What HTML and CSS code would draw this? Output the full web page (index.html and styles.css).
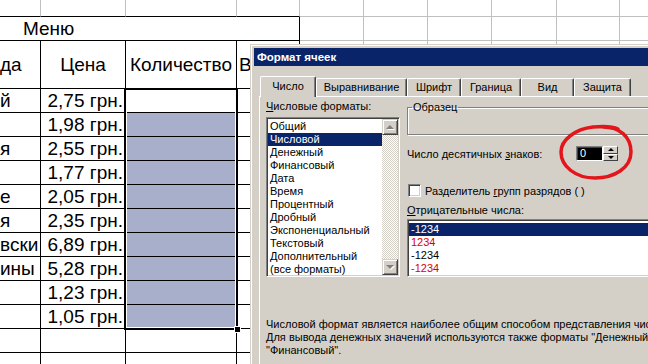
FILE: index.html
```html
<!DOCTYPE html>
<html lang="ru">
<head>
    <meta charset="UTF-8">
    <title>Формат ячеек</title>
    <link rel="stylesheet" href="styles.css">
</head>
<body>
    <div class="sheet">
        <!-- row 1 -->
        <div class="c top"></div><div class="c top"></div><div class="c top"></div><div class="c top"></div>
        <div class="c"></div><div class="c"></div><div class="c"></div><div class="c"></div><div class="c"></div><div class="c"></div>
        <!-- row 2 -->
        <div class="c b menu">Меню</div>
        <div class="c"></div><div class="c"></div><div class="c"></div><div class="c"></div><div class="c"></div><div class="c"></div>
        <!-- header -->
        <div class="c b">да</div>
        <div class="c b center">Цена</div>
        <div class="c b center">Количество</div>
        <div class="c b pad">В</div>
        <div class="c"></div><div class="c"></div><div class="c"></div><div class="c"></div><div class="c"></div><div class="c"></div>
        <!-- data -->
        <div class="c b">й</div><div class="c b price">2,75 грн.</div><div class="c b"></div><div class="c b"></div><div class="filler"></div>
        <div class="c b"></div><div class="c b price">1,98 грн.</div><div class="c b sel"></div><div class="c b"></div><div class="filler"></div>
        <div class="c b">я</div><div class="c b price">2,55 грн.</div><div class="c b sel"></div><div class="c b"></div><div class="filler"></div>
        <div class="c b"></div><div class="c b price">1,77 грн.</div><div class="c b sel"></div><div class="c b"></div><div class="filler"></div>
        <div class="c b">е</div><div class="c b price">2,05 грн.</div><div class="c b sel"></div><div class="c b"></div><div class="filler"></div>
        <div class="c b">я</div><div class="c b price">2,35 грн.</div><div class="c b sel"></div><div class="c b"></div><div class="filler"></div>
        <div class="c b">вски</div><div class="c b price">6,89 грн.</div><div class="c b sel"></div><div class="c b"></div><div class="filler"></div>
        <div class="c b">ины</div><div class="c b price">5,28 грн.</div><div class="c b sel"></div><div class="c b"></div><div class="filler"></div>
        <div class="c b"></div><div class="c b price">1,23 грн.</div><div class="c b sel"></div><div class="c b"></div><div class="filler"></div>
        <div class="c b"></div><div class="c b price">1,05 грн.</div><div class="c b sel"></div><div class="c b"></div><div class="filler"></div>
        <div class="c b"></div><div class="c b"></div><div class="c b"></div><div class="c b"></div><div class="filler"></div>
        <div class="c b"></div><div class="c b"></div><div class="c b"></div><div class="c b"></div><div class="filler"></div>

        <div class="selection"><span class="handle"></span></div>
    </div>

    <div class="dialog">
        <div class="titlebar">Формат ячеек</div>
        <div class="tabs">
            <div class="tab active" style="width: 56px">Число</div>
            <div class="tab" style="width: 91px">Выравнивание</div>
            <div class="tab" style="width: 54px">Шрифт</div>
            <div class="tab" style="width: 60px">Граница</div>
            <div class="tab" style="width: 53px">Вид</div>
            <div class="tab" style="width: 57px">Защита</div>
        </div>
        <div class="panel">
            <div class="panel-cols">
                <div class="col-left">
                    <div class="label"><u>Ч</u>исловые форматы:</div>
                    <div class="listbox fmt-list">
                        <ul class="items">
                            <li>Общий</li>
                            <li class="picked">Числовой</li>
                            <li>Денежный</li>
                            <li>Финансовый</li>
                            <li>Дата</li>
                            <li>Время</li>
                            <li>Процентный</li>
                            <li>Дробный</li>
                            <li>Экспоненциальный</li>
                            <li>Текстовый</li>
                            <li>Дополнительный</li>
                            <li>(все форматы)</li>
                        </ul>
                        <div class="scrollbar">
                            <div class="sb-btn"><span class="arrow up"></span></div>
                            <div class="sb-track"></div>
                            <div class="sb-btn"><span class="arrow down"></span></div>
                        </div>
                    </div>
                </div>
                <div class="col-right">
                    <fieldset class="sample">
                        <legend>Образец</legend>
                    </fieldset>
                    <div class="decimals">
                        <span class="dec-label">Число десятичных <u>з</u>наков:</span>
                        <div class="spin">
                            <div class="spin-edit">0</div>
                            <div class="spin-btns">
                                <div class="spin-btn"><span class="tri up"></span></div>
                                <div class="spin-btn"><span class="tri down"></span></div>
                            </div>
                        </div>
                    </div>
                    <div class="check-row">
                        <span class="checkbox"></span>
                        <span>Разделитель <u>г</u>рупп разрядов ( )</span>
                    </div>
                    <div class="label"><u>О</u>трицательные числа:</div>
                    <div class="listbox neg-list">
                        <ul class="items">
                            <li class="picked">-1234</li>
                            <li class="red">1234</li>
                            <li>-1234</li>
                            <li class="red">-1234</li>
                        </ul>
                    </div>
                </div>
            </div>
            <p class="desc">Числовой формат является наиболее общим способом представления чисел.<br>Для вывода денежных значений используются также форматы "Денежный" и<br>"Финансовый".</p>
        </div>
    </div>

    <svg class="mark" width="90" height="64" viewBox="0 0 90 64">
        <path d="M51 7 C68 7 79 17 79 32 C79 48 62 58 43 58 C23 58 9 46 9 32 C9 20 23 9 41 7 C51 6 60 6 66 9" fill="none" stroke="#e2161b" stroke-width="3.5" stroke-linecap="round"/>
    </svg>
</body>
</html>
```

FILE: styles.css
```css
body {
    margin: 0;
    width: 648px;
    height: 364px;
    overflow: hidden;
    position: relative;
    background: #fff;
    font-family: 'Liberation Sans', Arial, sans-serif;
    color: #000;
}

/* spreadsheet behind the dialog */
.sheet {
    position: relative;
    display: grid;
    grid-template-columns: 41px 85px 111px 63px 64px 64px 64px 65px 63px 64px;
    grid-template-rows: 17px 24px 48px repeat(12, 24px);
    width: 684px;
    font-size: 19px;
}
.c {
    box-sizing: border-box;
    border-right: 1px solid #c0c0c0;
    border-bottom: 1px solid #c0c0c0;
    display: flex;
    align-items: center;
    white-space: nowrap;
    overflow: hidden;
}
.c.top {
    border-bottom-color: #000;
}
.c.b {
    border-color: #000;
}
.menu {
    grid-column: 1 / 5;
    padding-left: 23px;
}
.center {
    justify-content: center;
}
.pad {
    padding-left: 2px;
}
.price {
    justify-content: flex-end;
    padding-right: 2px;
}
.sel {
    background: #a8afcb;
}
.filler {
    grid-column: 5 / -1;
}
.selection {
    position: absolute;
    left: 124px;
    top: 88px;
    width: 110px;
    height: 238px;
    border: 2px solid #000;
    box-shadow: inset 0 0 0 1px #fff;
}
.selection .handle {
    position: absolute;
    right: -5px;
    bottom: -5px;
    width: 5px;
    height: 5px;
    background: #000;
    border: 1px solid #fff;
}

/* dialog window */
.dialog {
    position: absolute;
    left: 250px;
    top: 44px;
    width: 460px;
    height: 340px;
    background: #d4d0c8;
    border: 1px solid #d4d0c8;
    box-shadow: inset 1px 1px #fff;
    padding: 3px;
    font-size: 11px;
}
.titlebar {
    height: 18px;
    line-height: 18px;
    padding-left: 3px;
    background: #0a246a;
    color: #fff;
    font-weight: bold;
    font-size: 11.5px;
}
.tabs {
    display: flex;
    align-items: flex-end;
    height: 21px;
    margin-top: 9px;
    padding-left: 6px;
}
.tab {
    box-sizing: border-box;
    height: 18px;
    line-height: 16px;
    text-align: center;
    border-top: 1px solid #fff;
    border-left: 1px solid #fff;
    border-right: 1px solid #404040;
    box-shadow: inset -1px 0 #808080;
    border-radius: 2px 2px 0 0;
}
.tab.active {
    height: 21px;
    line-height: 19px;
    margin-bottom: -1px;
    position: relative;
    background: #d4d0c8;
}
.panel {
    margin-left: 5px;
    height: 300px;
    border-top: 1px solid #fff;
    border-left: 1px solid #fff;
    padding: 3px 0 0 6px;
}
.panel-cols {
    display: flex;
    gap: 7px;
}
.col-left {
    width: 134px;
}
.col-right {
    flex: 1;
}
.label {
    line-height: 13px;
    white-space: nowrap;
}
.listbox {
    box-sizing: border-box;
    background: #fff;
    border: 1px solid;
    border-color: #808080 #fff #fff #808080;
    box-shadow: inset 1px 1px #404040, inset -1px -1px #d4d0c8;
    padding: 1px;
    display: flex;
}
.items {
    list-style: none;
    margin: 0;
    padding: 1px 0 0;
    flex: 1;
}
.items li {
    height: 13px;
    line-height: 13px;
    padding-left: 2px;
    white-space: nowrap;
}
.items li.picked {
    background: #0a246a;
    color: #fff;
}
.items li.red {
    color: #e00000;
}
.fmt-list {
    margin-top: 4px;
    height: 160px;
}
.scrollbar {
    width: 16px;
    display: flex;
    flex-direction: column;
}
.sb-btn {
    box-sizing: border-box;
    height: 16px;
    background: #d4d0c8;
    border: 1px solid;
    border-color: #d4d0c8 #404040 #404040 #d4d0c8;
    box-shadow: inset 1px 1px #fff, inset -1px -1px #808080;
    display: flex;
    align-items: center;
    justify-content: center;
}
.sb-track {
    flex: 1;
    background: repeating-conic-gradient(#d4d0c8 0 25%, #fff 0 50%) 0 0 / 2px 2px;
}
.arrow {
    width: 0;
    height: 0;
    border-left: 4px solid transparent;
    border-right: 4px solid transparent;
    filter: drop-shadow(1px 1px 0 #fff);
}
.arrow.up {
    border-bottom: 4px solid #808080;
}
.arrow.down {
    border-top: 4px solid #808080;
}
.sample {
    box-sizing: border-box;
    height: 34px;
    margin: 1px 0 0;
    padding: 0;
    border: 1px solid #808080;
    box-shadow: inset 1px 1px #fff, 1px 1px #fff;
}
.sample legend {
    margin-left: 4px;
    padding: 0 1px;
    line-height: 13px;
}
.decimals {
    display: flex;
    align-items: center;
    margin-top: 11px;
    height: 15px;
}
.dec-label {
    width: 169px;
    white-space: nowrap;
}
.spin {
    display: flex;
}
.spin-edit {
    box-sizing: border-box;
    width: 27px;
    height: 15px;
    border: 1px solid;
    border-color: #808080 #fff #fff #808080;
    box-shadow: inset 1px 1px #404040;
    background: #000;
    color: #fff;
    line-height: 12px;
    padding-left: 3px;
}
.spin-btns {
    display: flex;
    flex-direction: column;
}
.spin-btn {
    box-sizing: border-box;
    width: 15px;
    height: 7.5px;
    background: #d4d0c8;
    border: 1px solid;
    border-color: #fff #404040 #404040 #fff;
    display: flex;
    align-items: center;
    justify-content: center;
}
.tri {
    width: 0;
    height: 0;
    border-left: 3px solid transparent;
    border-right: 3px solid transparent;
}
.tri.up {
    border-bottom: 3px solid #000;
}
.tri.down {
    border-top: 3px solid #000;
}
.check-row {
    display: flex;
    align-items: center;
    gap: 4px;
    margin-top: 23px;
    height: 13px;
    white-space: nowrap;
}
.checkbox {
    box-sizing: border-box;
    width: 13px;
    height: 13px;
    margin-left: 1px;
    background: #fff;
    border: 1px solid;
    border-color: #808080 #fff #fff #808080;
    box-shadow: inset 1px 1px #404040, inset -1px -1px #d4d0c8;
}
.col-right .label {
    margin-top: 7px;
}
.neg-list {
    margin-top: 2px;
    height: 58px;
}
.neg-list .items {
    padding-top: 2px;
}
.desc {
    margin: 41px 0 0;
    line-height: 13px;
    white-space: nowrap;
}

/* red marker drawn over the spinner */
.mark {
    position: absolute;
    left: 552px;
    top: 120px;
}
```
